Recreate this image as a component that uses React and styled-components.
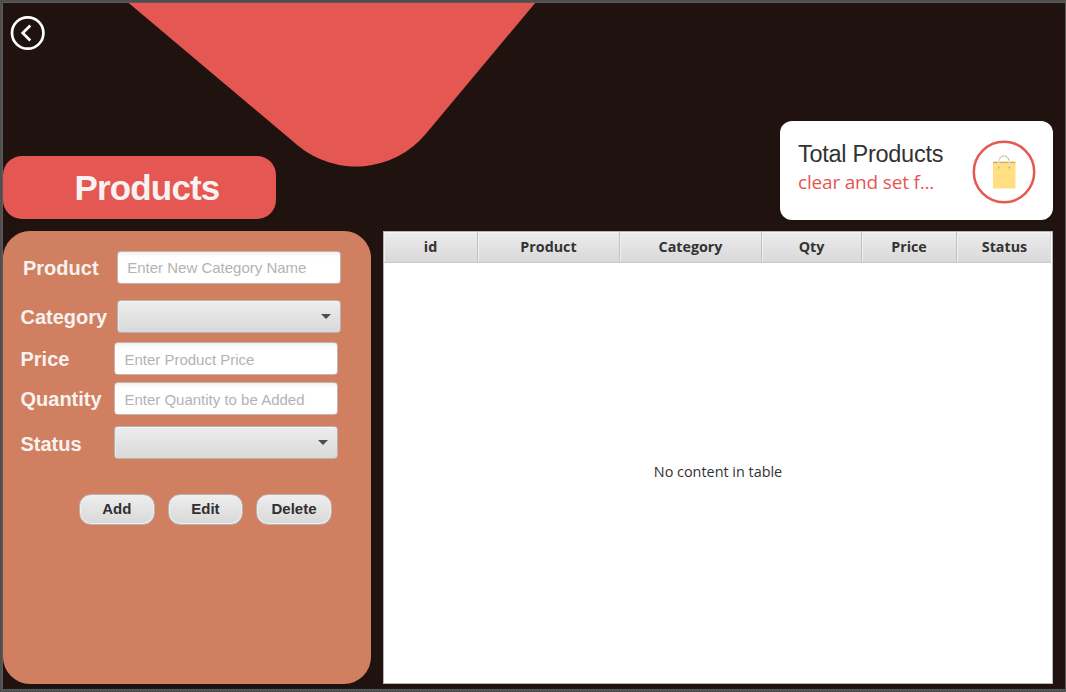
import React from "react";
import styled, { createGlobalStyle } from "styled-components";

const GlobalStyle = createGlobalStyle`
  * { box-sizing: border-box; }
  body { margin: 0; overflow: hidden; font-family: "Liberation Sans", Arial, sans-serif; }
`;

const Frame = styled.div`
  width: 1066px;
  height: 692px;
  padding: 2px 0 2px 2px;
  background: repeating-conic-gradient(#414141 0 25%, #5d5d5d 0 50%) 0 0 / 2px 2px;
`;

const Screen = styled.div`
  position: relative;
  width: 1064px;
  height: 688px;
  border: 1px solid #60595a;
  background: #20130f;
  display: flex;
  flex-direction: column;
  overflow: hidden;
`;

const Backdrop = styled.svg`
  position: absolute;
  left: 0;
  top: 0;
`;

const Header = styled.header`
  position: relative;
  height: 228.4px;
  display: flex;
  justify-content: space-between;
`;

const Heading = styled.div`
  display: flex;
  flex-direction: column;
`;

const BackButton = styled.button`
  width: 36px;
  height: 36px;
  margin: 12px 0 0 7px;
  padding: 0;
  border: 0;
  background: none;
`;

const Banner = styled.h1`
  width: 273px;
  height: 63px;
  margin: 105px 0 0;
  padding: 0 0 0 15px;
  border-radius: 19px;
  background: #e55752;
  color: #f8f2f1;
  font-size: 35px;
  line-height: 63px;
  letter-spacing: -0.85px;
  text-align: center;
`;

const SummaryCard = styled.section`
  width: 273px;
  height: 98.8px;
  margin: 118.3px 12px 0 0;
  padding: 18.3px 17px 0 18px;
  border-radius: 12px;
  background: #fff;
  display: flex;
  justify-content: space-between;
`;

const SummaryTitle = styled.div`
  color: #323232;
  font-size: 23.5px;
  line-height: 28px;
  letter-spacing: -0.27px;
  white-space: nowrap;
`;

const SummaryValue = styled.div`
  color: #e55752;
  font-family: "Open Sans", sans-serif;
  font-size: 19px;
  line-height: 28px;
  letter-spacing: -0.18px;
  white-space: nowrap;
`;

const Content = styled.main`
  position: relative;
  display: flex;
  gap: 12px;
`;

const Panel = styled.form`
  width: 368px;
  height: 453px;
  padding-top: 19.6px;
  border-radius: 27px;
  background: #d08060;
`;

const Row = styled.div`
  display: flex;
  align-items: center;
  height: 32.5px;
  margin-bottom: ${(p) => p.$after}px;
  padding-left: ${(p) => p.$indent || 17.5}px;
`;

const Label = styled.label`
  width: ${(p) => p.$width}px;
  padding-top: ${(p) => p.$drop || 1}px;
  color: #f8f2f1;
  font-size: 20px;
  font-weight: bold;
  line-height: 24px;
`;

const Input = styled.input`
  width: 224px;
  height: 33px;
  padding: 1px 9px 0 9.5px;
  border: 1px solid #c2b4ad;
  border-radius: 3.5px;
  background: linear-gradient(#f1f1f1, #fff 5px);
  font: 15px "Liberation Sans", Arial, sans-serif;
  &::placeholder { color: #b3b3b3; opacity: 1; }
`;

const Combo = styled.div`
  width: 224px;
  height: 33px;
  padding-right: 9px;
  display: flex;
  align-items: center;
  justify-content: flex-end;
  border: 1px solid #b9b2af;
  border-radius: 3.5px;
  background: linear-gradient(#ededed, #d9d9d9);
  box-shadow: inset 0 1px #f5f5f5, inset 1px 0 #e8e8e8;
`;

const Arrow = styled.i`
  border: 5px solid transparent;
  border-top-color: #4d4d4d;
  border-bottom: 0;
`;

const Actions = styled.div`
  display: flex;
  gap: 13px;
  padding: 0 0 0 76px;
`;

const ActionButton = styled.button`
  width: 75.6px;
  height: 30.5px;
  padding: 0 0 2px;
  border: 1.5px solid #b9b1ae;
  border-radius: 12px;
  background: linear-gradient(#eee, #d8d8d8);
  box-shadow: inset 0 0 0 1px #f0f0f0;
  color: #303030;
  font: bold 15px "Liberation Sans", Arial, sans-serif;
`;

const Table = styled.section`
  width: 670px;
  height: 453px;
  border: 1px solid #b4b4b4;
  background: #fff;
  font-family: "Open Sans", sans-serif;
  color: #333;
`;

const TableHead = styled.div`
  display: flex;
  width: 667px;
  height: 31px;
  background: linear-gradient(#ececec, #d9d9d9);
  border-bottom: 1px solid #c9c9c9;
  box-shadow: inset 0 1px #f6f6f6;
`;

const Column = styled.div`
  width: ${(p) => p.$width}px;
  border-right: 1px solid #c2c2c2;
  box-shadow: inset 1px 0 #f0f0f0;
  text-align: center;
  font-size: 14.3px;
  font-weight: bold;
  line-height: 30px;
  &:last-child {
    padding-left: 2px;
    border-right-color: #ddd;
  }
`;

const Empty = styled.div`
  height: 417px;
  display: flex;
  align-items: center;
  justify-content: center;
  font-size: 14.4px;
`;

const columns = [
  ["id", 94],
  ["Product", 142],
  ["Category", 142],
  ["Qty", 100],
  ["Price", 95],
  ["Status", 94],
];

function BagIcon() {
  return (
    <svg width="64" height="64" viewBox="0 0 64 64">
      <circle cx="32" cy="32" r="30.2" fill="#fff" stroke="#e55752" strokeWidth="2.5" />
      <path d="M21 22h22.500v26.500H21z" fill="#ffdf82" />
      <path d="M21 22.400h22.500" stroke="#cfaf55" strokeWidth="1.4" />
      <path d="M26.700 28v-5c0-4 2-7 5.300-7s5.300 3 5.300 7v5" fill="none" stroke="#e5e2d2" strokeWidth="1.4" />
      <path d="M27.500 19c1-2 2.500-3 4.500-3s4 1.500 4.800 4" fill="none" stroke="#b9b7a6" strokeWidth="1" strokeDasharray="2 1.500" />
      <path d="M26.700 26.500v2M37.300 26.500v2" stroke="#b8a977" strokeWidth="1.200" />
    </svg>
  );
}

export default function App() {
  return (
    <>
      <GlobalStyle />
      <Frame>
        <Screen>
          <Backdrop width="1062" height="686" viewBox="3 3 1062 686">
            <path d="M127.500 2L297.500 145.200A91 91 0 0 0 425.700 134L536 2Z" fill="#e55752" />
          </Backdrop>
          <Header>
            <Heading>
              <BackButton type="button" aria-label="Back">
                <svg width="36" height="36" viewBox="0 0 36 36" fill="none" stroke="#fff">
                  <circle cx="17.700" cy="18" r="15.700" strokeWidth="2.700" />
                  <path d="M20.300 10.500L12.700 18l7.600 7.500" strokeWidth="2.700" />
                </svg>
              </BackButton>
              <Banner>Products</Banner>
            </Heading>
            <SummaryCard>
              <div>
                <SummaryTitle>Total Products</SummaryTitle>
                <SummaryValue>clear and set f...</SummaryValue>
              </div>
              <BagIcon />
            </SummaryCard>
          </Header>
          <Content>
            <Panel>
              <Row $after={16.500} $indent={20}>
                <Label $width={93.700}>Product</Label>
                <Input placeholder="Enter New Category Name" />
              </Row>
              <Row $after={10}>
                <Label $width={96.200}>Category</Label>
                <Combo><Arrow /></Combo>
              </Row>
              <Row $after={7.500}>
                <Label $width={93.400}>Price</Label>
                <Input placeholder="Enter Product Price" />
              </Row>
              <Row $after={11}>
                <Label $width={93.400}>Quantity</Label>
                <Input placeholder="Enter Quantity to be Added" />
              </Row>
              <Row $after={36}>
                <Label $width={93.400} $drop={3}>Status</Label>
                <Combo><Arrow /></Combo>
              </Row>
              <Actions>
                <ActionButton type="button">Add</ActionButton>
                <ActionButton type="button">Edit</ActionButton>
                <ActionButton type="button">Delete</ActionButton>
              </Actions>
            </Panel>
            <Table>
              <TableHead>
                {columns.map(([name, width]) => (
                  <Column key={name} $width={width}>{name}</Column>
                ))}
              </TableHead>
              <Empty>No content in table</Empty>
            </Table>
          </Content>
        </Screen>
      </Frame>
    </>
  );
}
